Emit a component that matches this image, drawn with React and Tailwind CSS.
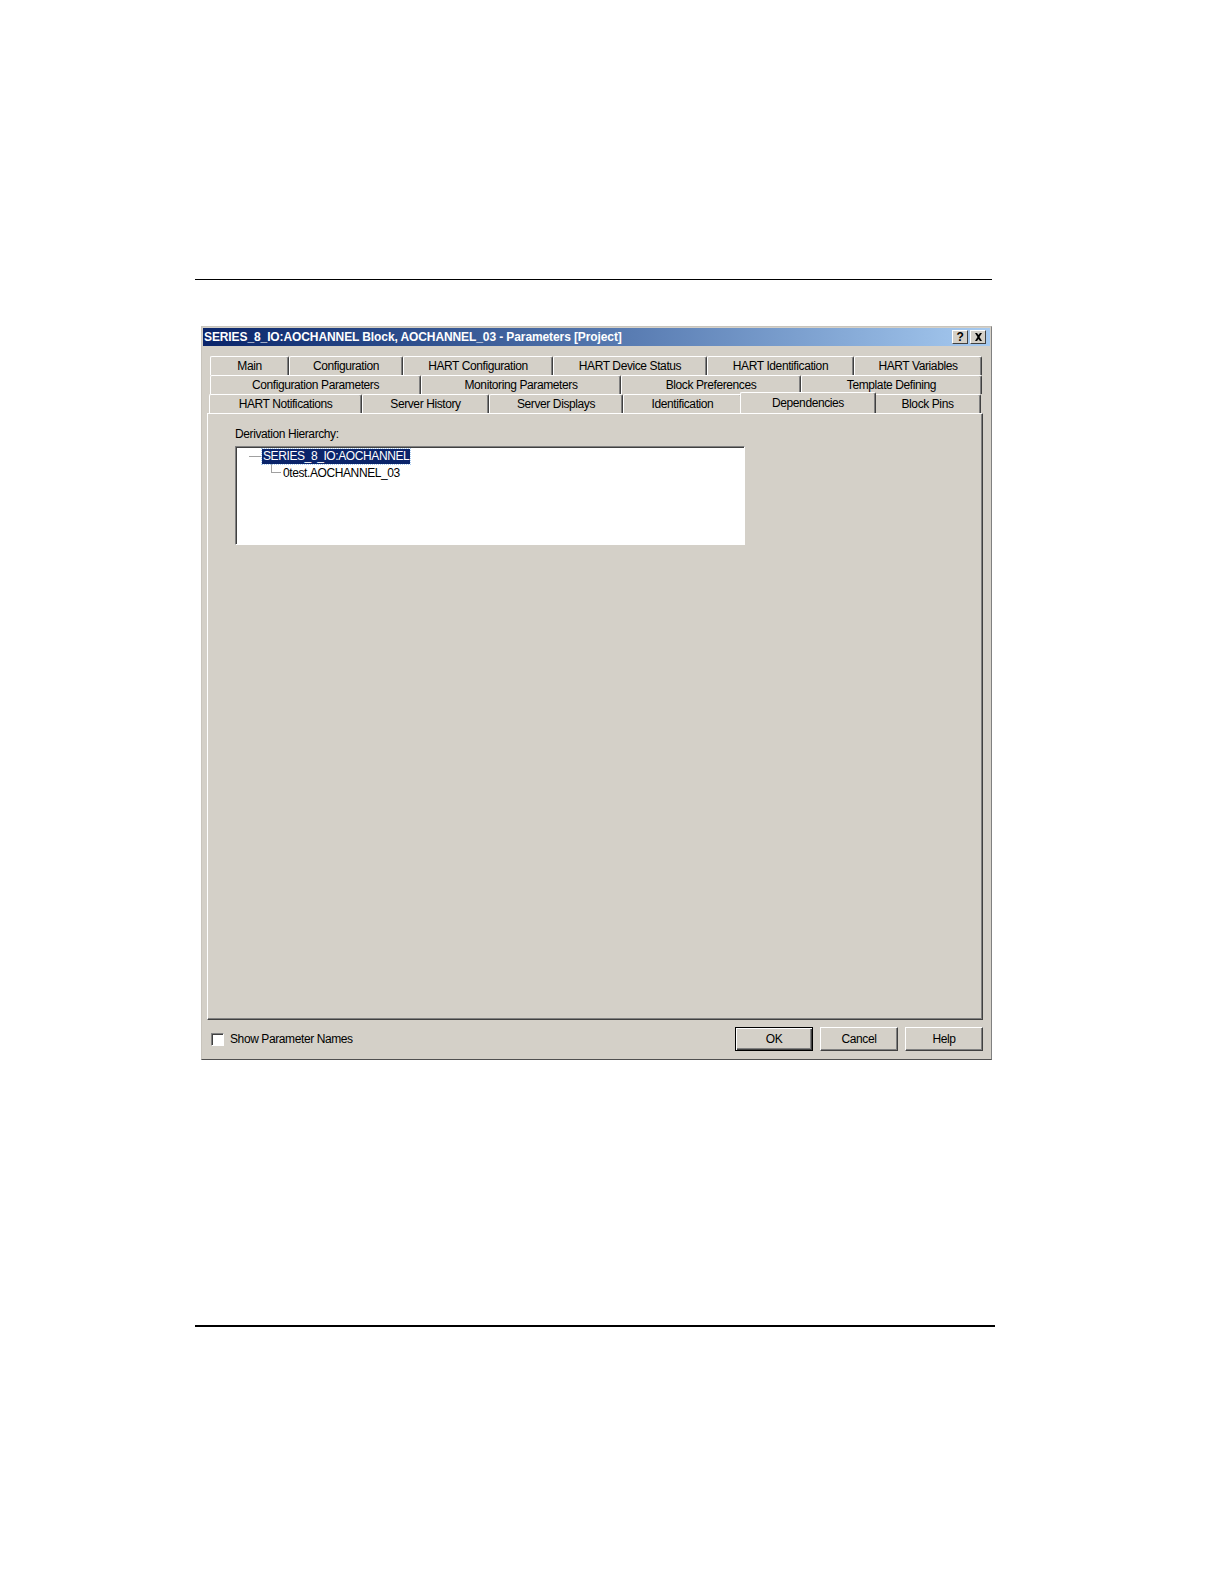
import React from "react";

const rows = [
  [
    { label: "Main", w: "w-[79px]" },
    { label: "Configuration", w: "w-[114px]" },
    { label: "HART Configuration", w: "w-[150px]" },
    { label: "HART Device Status", w: "w-[154px]" },
    { label: "HART Identification", w: "w-[147px]" },
    { label: "HART Variables", w: "w-[128px]" },
  ],
  [
    { label: "Configuration Parameters", w: "w-[211px]" },
    { label: "Monitoring Parameters", w: "w-[200px]" },
    { label: "Block Preferences", w: "w-[180px]" },
    { label: "Template Defining", w: "w-[181px]" },
  ],
  [
    { label: "HART Notifications", w: "w-[153px]" },
    { label: "Server History", w: "w-[127px]" },
    { label: "Server Displays", w: "w-[134px]" },
    { label: "Identification", w: "w-[119px]" },
    { label: "Dependencies", w: "w-[136px]", active: true },
    { label: "Block Pins", w: "w-[107px]" },
  ],
];

function Tab({ label, w, active }) {
  if (active) {
    return (
      <div
        className={`${w} -mx-[2px] -mt-[2px] h-[21px] relative z-10 flex items-start justify-center pt-[1px] bg-[#d4d0c8] border-t border-l border-white border-r border-r-[#404040] rounded-t-[2px] shadow-[inset_-1px_0_#808080]`}
      >
        {label}
      </div>
    );
  }
  return (
    <div
      className={`${w} h-[19px] flex items-center justify-center bg-[#d4d0c8] border-t border-l border-white border-r border-r-[#404040] rounded-t-[2px] shadow-[inset_-1px_0_#808080]`}
    >
      {label}
    </div>
  );
}

function Button({ title, isDefault }) {
  return (
    <div
      className={`w-[78px] h-[24px] flex items-center justify-center bg-[#d4d0c8] ${
        isDefault
          ? "border border-black shadow-[inset_1px_1px_#fff,inset_-1px_-1px_#404040,inset_-2px_-2px_#808080]"
          : "border-t border-l border-white border-r border-b border-r-[#404040] border-b-[#404040] shadow-[inset_-1px_-1px_#808080]"
      }`}
    >
      {title}
    </div>
  );
}

export default function App() {
  return (
    <div className="w-[1224px] h-[1584px] bg-white text-black font-['Liberation_Sans',Arial,sans-serif] text-[12px] tracking-[-0.4px]">
      <div className="pt-[279px] pl-[195px]">
        <div className="w-[797px] h-px bg-black" />
      </div>

      {/* dialog */}
      <div className="ml-[201px] mt-[46px] w-[791px] h-[734px] bg-[#d4d0c8] border-l border-t border-[#c8c4bc] border-r border-b border-r-[#808080] border-b-[#505050] flex flex-col">
        <div className="h-[18px] mx-[1px] mt-[1px] flex items-center justify-between bg-gradient-to-r from-[#0a246a] to-[#a6caf0] pl-[1px] pr-[4px]">
          <span className="text-white font-bold text-[12px] tracking-[-0.1px]">
            SERIES_8_IO:AOCHANNEL Block, AOCHANNEL_03 - Parameters [Project]
          </span>
          <div className="flex gap-[2px]">
            <div className="w-[16px] h-[14px] flex items-center justify-center bg-[#d4d0c8] border-t border-l border-white border-r border-b border-r-[#404040] border-b-[#404040] font-bold text-[12px] leading-none">
              ?
            </div>
            <div className="w-[16px] h-[14px] flex items-center justify-center bg-[#d4d0c8] border-t border-l border-white border-r border-b border-r-[#404040] border-b-[#404040]">
              <svg width="9" height="8" viewBox="0 0 9 8">
                <path d="M1 0h2l1.5 2 1.5-2h2L5.5 4 8 8H6L4.5 6 3 8H1l2.5-4z" fill="#000" />
              </svg>
            </div>
          </div>
        </div>

        <div className="pl-[5px] pt-[10px] flex flex-col">
          {/* tab rows */}
          <div className="flex flex-col pl-[3px]">
            <div className="flex">
              {rows[0].map((t) => (
                <Tab key={t.label} {...t} />
              ))}
            </div>
            <div className="flex">
              {rows[1].map((t) => (
                <Tab key={t.label} {...t} />
              ))}
            </div>
            <div className="flex -ml-[1px]">
              {rows[2].map((t) => (
                <Tab key={t.label} {...t} />
              ))}
            </div>
          </div>

          {/* panel */}
          <div className="w-[776px] h-[607px] border-t border-l border-white border-r border-b border-r-[#404040] border-b-[#404040] shadow-[inset_-1px_-1px_#808080] pl-[27px] pt-[13px]">
            <div className="leading-[14px]">Derivation Hierarchy:</div>
            <div className="mt-[5px] w-[510px] h-[99px] bg-white border-t border-l border-[#808080] border-r border-b border-r-white border-b-white shadow-[inset_1px_1px_#404040]">
              <div className="pt-[2px] pl-[13px] flex flex-col">
                <div className="flex items-center">
                  <div className="w-[13px] border-t border-[#a0a0a0]" />
                  <span className="bg-[#0a246a] text-white px-[1px] leading-[15px] outline outline-1 outline-dotted outline-[#a6caf0]">
                    SERIES_8_IO:AOCHANNEL
                  </span>
                </div>
                <div className="flex items-start pl-[22px]">
                  <div className="w-[10px] h-[9px] border-l border-b border-[#a0a0a0]" />
                  <span className="pl-[2px] leading-[18px]">0test.AOCHANNEL_03</span>
                </div>
              </div>
            </div>
          </div>

          {/* bottom controls */}
          <div className="w-[776px] flex items-center justify-between pt-[7px]">
            <div className="flex items-center gap-[6px] pl-[4px]">
              <div className="w-[13px] h-[13px] bg-white border-t border-l border-[#808080] border-r border-b border-r-white border-b-white shadow-[inset_1px_1px_#404040]" />
              <span>Show Parameter Names</span>
            </div>
            <div className="flex gap-[7px]">
              <Button title="OK" isDefault />
              <Button title="Cancel" />
              <Button title="Help" />
            </div>
          </div>
        </div>
      </div>

      <div className="ml-[195px] mt-[265px] w-[800px] h-[2px] bg-black" />
    </div>
  );
}
